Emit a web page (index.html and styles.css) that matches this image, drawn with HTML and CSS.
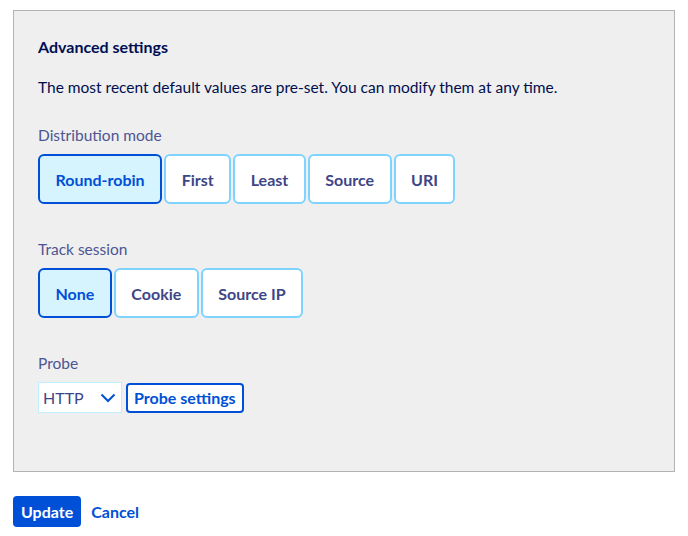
FILE: index.html
```html
<!DOCTYPE html>
<html lang="en">
<head>
    <meta charset="UTF-8">
    <meta name="viewport" content="width=device-width, initial-scale=1.0">
    <title>Advanced settings</title>
    <link rel="stylesheet" href="styles.css">
</head>
<body>
    <div class="panel">
        <h3>Advanced settings</h3>
        <p>The most recent default values are pre-set. You can modify them at any time.</p>

        <div class="field">
            <label>Distribution mode</label>
            <div class="tiles">
                <button class="tile selected">Round-robin</button>
                <button class="tile">First</button>
                <button class="tile">Least</button>
                <button class="tile">Source</button>
                <button class="tile">URI</button>
            </div>
        </div>

        <div class="field">
            <label>Track session</label>
            <div class="tiles">
                <button class="tile selected">None</button>
                <button class="tile">Cookie</button>
                <button class="tile">Source IP</button>
            </div>
        </div>

        <div class="field">
            <label>Probe</label>
            <div class="probe-row">
                <div class="select">
                    <span>HTTP</span>
                    <svg width="16" height="10" viewBox="0 0 16 10"><path d="M1.5 1.5l6.5 6.5 6.5-6.5" fill="none" stroke="#0050d7" stroke-width="2"/></svg>
                </div>
                <button class="outline">Probe settings</button>
            </div>
        </div>
    </div>

    <div class="actions">
        <button class="primary">Update</button>
        <a href="#" class="link">Cancel</a>
    </div>
</body>
</html>
```

FILE: styles.css
```css
body {
    font-family: 'Lato', 'Noto Sans', sans-serif;
    font-size: 16px;
    color: #000e4e;
    background: #fff;
    margin: 0;
    padding: 10px 13px;
}

.panel {
    background-color: #efefef;
    border: 1px solid #b3b3b3;
    padding: 24px 24px 58px;
}

h3 {
    margin: 0;
    font-size: 16px;
    line-height: 24px;
    font-weight: 700;
    color: #000e54;
}

p {
    margin: 16px 0 0;
    font-size: 15.5px;
    line-height: 24px;
    color: #000e4e;
}

.field {
    margin-top: 24px;
}

.field + .field {
    margin-top: 33px;
}

label {
    display: block;
    font-size: 15.5px;
    line-height: 24px;
    color: #4d5593;
    margin-bottom: 7px;
}

.tiles {
    display: flex;
    gap: 2px;
}

.tile {
    font-family: inherit;
    font-size: 16px;
    font-weight: 700;
    color: #3e4586;
    background: #fff;
    border: 2px solid #7fd3ff;
    border-radius: 6px;
    height: 50px;
    padding: 0 15.5px;
    cursor: pointer;
}

.tile.selected {
    color: #0050d7;
    background: #d6f4fd;
    border-color: #0050d7;
}

.probe-row {
    display: flex;
    gap: 4px;
    align-items: center;
}

.select {
    box-sizing: border-box;
    width: 84px;
    height: 31px;
    background: #fff;
    border: 1px solid #bdefff;
    display: flex;
    align-items: center;
    justify-content: space-between;
    padding: 0 5px 0 4px;
    color: #3e4586;
}

.outline {
    font-family: inherit;
    font-size: 16px;
    font-weight: 700;
    color: #0050d7;
    background: #fff;
    border: 2px solid #0050d7;
    border-radius: 4px;
    height: 30px;
    padding: 0 6px;
}

.actions {
    display: flex;
    align-items: center;
    gap: 10px;
    margin-top: 24px;
}

.primary {
    font-family: inherit;
    font-size: 16px;
    font-weight: 700;
    color: #fff;
    background: #0050d7;
    border: none;
    border-radius: 4px;
    height: 31px;
    padding: 0 8px;
}

.link {
    font-weight: 700;
    color: #0050d7;
    text-decoration: none;
}
```
